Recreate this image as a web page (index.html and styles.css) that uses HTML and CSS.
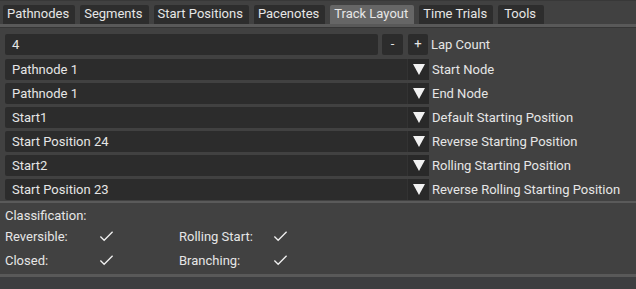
FILE: index.html
```html
<!DOCTYPE html>
<html lang="en">
<head>
    <meta charset="UTF-8">
    <title>Track Layout</title>
    <link rel="stylesheet" href="styles.css">
</head>
<body>
    <div class="tabs">
        <div class="tab">Pathnodes</div>
        <div class="tab">Segments</div>
        <div class="tab">Start Positions</div>
        <div class="tab">Pacenotes</div>
        <div class="tab active">Track Layout</div>
        <div class="tab">Time Trials</div>
        <div class="tab tools">Tools</div>
    </div>

    <div class="fields">
        <div class="row lap">
            <div class="input">4</div>
            <div class="step">-</div>
            <div class="step plus">+</div>
            <span class="label">Lap Count</span>
        </div>
        <div class="row">
            <div class="combo"><span>Pathnode 1</span><i class="arrow"></i></div>
            <span class="label">Start Node</span>
        </div>
        <div class="row">
            <div class="combo"><span>Pathnode 1</span><i class="arrow"></i></div>
            <span class="label">End Node</span>
        </div>
        <div class="row">
            <div class="combo"><span>Start1</span><i class="arrow"></i></div>
            <span class="label">Default Starting Position</span>
        </div>
        <div class="row">
            <div class="combo"><span>Start Position 24</span><i class="arrow"></i></div>
            <span class="label">Reverse Starting Position</span>
        </div>
        <div class="row">
            <div class="combo"><span>Start2</span><i class="arrow"></i></div>
            <span class="label">Rolling Starting Position</span>
        </div>
        <div class="row">
            <div class="combo"><span>Start Position 23</span><i class="arrow"></i></div>
            <span class="label">Reverse Rolling Starting Position</span>
        </div>
    </div>

    <div class="classification">
        <div class="title">Classification:</div>
        <div class="flags">
            <span>Reversible:</span>
            <svg class="check" viewBox="0 0 16 12"><path d="M1.5 6.5 L5.5 10.5 L14.5 1.5"/></svg>
            <span>Rolling Start:</span>
            <svg class="check" viewBox="0 0 16 12"><path d="M1.5 6.5 L5.5 10.5 L14.5 1.5"/></svg>
            <span>Closed:</span>
            <svg class="check" viewBox="0 0 16 12"><path d="M1.5 6.5 L5.5 10.5 L14.5 1.5"/></svg>
            <span>Branching:</span>
            <svg class="check" viewBox="0 0 16 12"><path d="M1.5 6.5 L5.5 10.5 L14.5 1.5"/></svg>
        </div>
    </div>

    <div class="footer"></div>
</body>
</html>
```

FILE: styles.css
```css
html, body {
    margin: 0;
    height: 100%;
}
body {
    background: #414141;
    color: #e6e6e6;
    font-family: Roboto, "Noto Sans", sans-serif;
    font-size: 13px;
    overflow: hidden;
    display: flex;
    flex-direction: column;
}
.tabs {
    display: flex;
    gap: 5px;
    padding: 4px 0 0 3px;
    border-top: 1px solid #383838;
    border-bottom: 3px solid #595959;
    box-shadow: 0 1px 0 #353535;
}
.tab {
    height: 19px;
    line-height: 18px;
    padding: 0 6px 0 4px;
    background: #2d2d2d;
    border-radius: 2px 2px 0 0;
}
.tab.active {
    background: #666;
}
.tab.tools {
    padding: 0 8px 0 6px;
}
.fields {
    padding: 7px 0 0 5px;
}
.row {
    display: flex;
    align-items: center;
    height: 21px;
    margin-bottom: 3px;
}
.row.lap {
    margin-bottom: 4px;
}
.row:last-child {
    margin-bottom: 0;
}
.input {
    width: 373px;
    height: 21px;
    line-height: 21px;
    padding-left: 7px;
    box-sizing: border-box;
    background: #2c2c2c;
    border-radius: 2px;
}
.step {
    width: 21px;
    height: 21px;
    line-height: 20px;
    margin-left: 4px;
    text-align: center;
    background: #2c2c2c;
    border-radius: 2px;
}
.step.plus {
    margin-left: 5px;
    width: 20px;
}
.combo {
    display: flex;
    width: 424px;
    height: 21px;
    background: #2c2c2c;
    border-radius: 2px;
}
.combo span {
    flex: 1;
    line-height: 21px;
    padding-left: 7px;
}
.arrow {
    width: 21px;
    background: #292929;
    border-left: 1px solid #333;
    display: flex;
    align-items: center;
    justify-content: center;
}
.arrow::after {
    content: "";
    border-left: 6px solid transparent;
    border-right: 6px solid transparent;
    border-top: 11px solid #f2f2f2;
}
.label {
    margin-left: 3px;
    white-space: nowrap;
}
.classification {
    margin: 1px 0 2px;
    border-top: 2px solid #5a5a5a;
    padding: 3px 0 0 5px;
}
.title {
    height: 18px;
    line-height: 19px;
}
.flags {
    display: grid;
    grid-template-columns: 94px 80px 94px 20px;
    grid-auto-rows: 24px;
    align-items: center;
}
.check {
    width: 15px;
    height: 12px;
    fill: none;
    stroke: #f0f0f0;
    stroke-width: 1.4;
}
.footer {
    flex: 1;
    border-top: 3px solid #595959;
    background: #3d3e40;
}
```
